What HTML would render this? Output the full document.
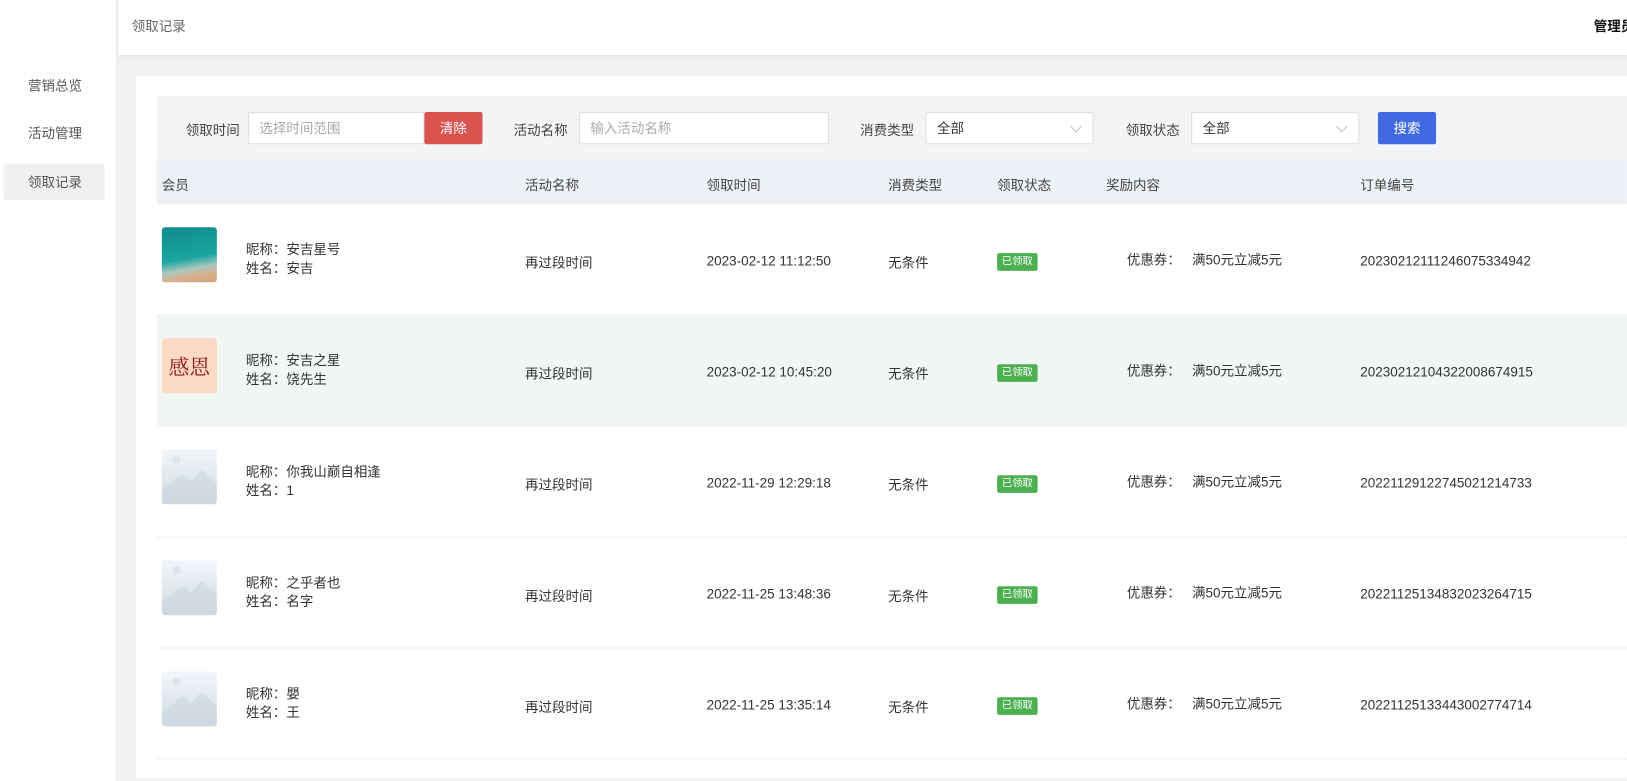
<!DOCTYPE html>
<html style="overflow:hidden;height:781px"><head><meta charset="utf-8"><style>
*{margin:0;padding:0;box-sizing:border-box}
body{width:1627px;height:781px;overflow:hidden;background:#f2f2f2;font-family:"Liberation Sans","Noto Sans CJK SC",sans-serif;font-size:13px;color:#333;position:relative}
#w{position:absolute;left:0;top:0;width:1568px;height:753px;overflow:hidden;transform:scale(1.0376);transform-origin:0 0}
.side{position:absolute;left:0;top:0;width:113px;height:753px;background:#fff;border-right:1px solid #e8e8e8}
.side div{position:absolute;left:3px;width:98px;height:35px;line-height:35px;padding-left:24px;color:#555}
.side .on{background:#f0f0f0;border-radius:3px}
.hdr{position:absolute;left:114px;top:0;width:1460px;height:53px;background:#fff;box-shadow:0 2px 6px rgba(0,0,0,.06)}
.hdr .t{position:absolute;left:13px;top:15px;color:#666}
.hdr .u{position:absolute;left:1422px;top:15px;color:#111;font-weight:bold;white-space:nowrap}
.card{position:absolute;left:131px;top:73px;width:1445px;height:677px;background:#fff}
.flt{position:absolute;left:20px;top:20px;right:0;height:62px;background:#f2f4f6}
.lbl{position:absolute;top:22px;color:#444}
.in{position:absolute;top:15px;height:31px;border:1px solid #dcdfe6;background:#fff;border-radius:2px;padding-left:10px;line-height:29px;color:#aaa}
.sel{color:#333}
.sel:after{content:"";position:absolute;right:12px;top:9px;width:7px;height:7px;border-right:1px solid #c0c4cc;border-bottom:1px solid #c0c4cc;transform:rotate(45deg)}
.btn{position:absolute;top:15px;height:31px;line-height:31px;text-align:center;color:#fff;border-radius:2px}
.th{position:absolute;left:20px;top:82px;right:0;height:42px;background:#eef1f4}
.th span,.row span{position:absolute}
.th span{top:13px;color:#444}
.row{position:absolute;left:20px;right:0;height:107px;border-bottom:1px solid #ebeef5}
.row span{top:46px}
.av{position:absolute;left:5px;top:22px;width:53px;height:53px;border-radius:3px;overflow:hidden}
.nm{position:absolute;left:86px;top:35px;line-height:18px}
.bd{position:absolute;left:810px;top:47px;width:39px;height:17px;background:#4caf50;color:#fff;font-size:10px;line-height:17px;text-align:center;border-radius:2px}
.ph{background:linear-gradient(#f3f6f8,#cfdbe3)}
</style></head><body><div id="w">
<div class="side"><div style="top:65px">营销总览</div><div style="top:111px">活动管理</div><div class="on" style="top:158px">领取记录</div></div>
<div class="hdr"><span class="t">领取记录</span><span class="u">管理员</span></div>
<div class="card">
<div class="flt">
<span class="lbl" style="left:28px">领取时间</span>
<div class="in" style="left:88px;width:170px">选择时间范围</div>
<div class="btn" style="left:258px;width:56px;background:#d9534f">清除</div>
<span class="lbl" style="left:344px">活动名称</span>
<div class="in" style="left:407px;width:241px">输入活动名称</div>
<span class="lbl" style="left:678px">消费类型</span>
<div class="in sel" style="left:741px;width:162px">全部</div>
<span class="lbl" style="left:934px">领取状态</span>
<div class="in sel" style="left:997px;width:162px">全部</div>
<div class="btn" style="left:1177px;width:56px;background:#4169e1">搜索</div>
</div>
<div class="th"><span style="left:5px">会员</span><span style="left:355px">活动名称</span><span style="left:530px">领取时间</span><span style="left:705px">消费类型</span><span style="left:810px">领取状态</span><span style="left:915px">奖励内容</span><span style="left:1160px">订单编号</span></div>

<div class="row" style="top:124px"><div class="av" style="background:linear-gradient(170deg,#0f8a8a 0%,#1aa5a0 55%,#a9c7bd 72%,#d9b08c 85%,#d2a27c 100%)"></div><div class="nm">昵称：安吉星号<br>姓名：安吉</div><span style="left:355px">再过段时间</span><span style="left:530px;top:47px">2023-02-12 11:12:50</span><span style="left:705px">无条件</span><div class="bd">已领取</div><span style="left:935px;top:43px">优惠券：&nbsp;&nbsp;&nbsp;满50元立减5元</span><span style="left:1160px;top:47px">20230212111246075334942</span></div>

<div class="row" style="top:231px;background:#f0f7f2"><div class="av" style="background:#fbd9c4;color:#8b1a1a;font-size:20px;line-height:53px;font-family:'Noto Serif CJK SC',serif;text-align:center">感恩</div><div class="nm">昵称：安吉之星<br>姓名：饶先生</div><span style="left:355px">再过段时间</span><span style="left:530px;top:47px">2023-02-12 10:45:20</span><span style="left:705px">无条件</span><div class="bd">已领取</div><span style="left:935px;top:43px">优惠券：&nbsp;&nbsp;&nbsp;满50元立减5元</span><span style="left:1160px;top:47px">20230212104322008674915</span></div>

<div class="row" style="top:338px"><div class="av ph"><svg width="53" height="53"><circle cx="14" cy="10" r="4" fill="#dde5ea"/><path d="M0 40 L20 24 L28 31 L38 20 L53 33 V53 H0Z" fill="#c9d6de" opacity=".6"/></svg></div><div class="nm">昵称：你我山巅自相逢<br>姓名：1</div><span style="left:355px">再过段时间</span><span style="left:530px;top:47px">2022-11-29 12:29:18</span><span style="left:705px">无条件</span><div class="bd">已领取</div><span style="left:935px;top:43px">优惠券：&nbsp;&nbsp;&nbsp;满50元立减5元</span><span style="left:1160px;top:47px">20221129122745021214733</span></div>

<div class="row" style="top:445px"><div class="av ph"><svg width="53" height="53"><circle cx="14" cy="10" r="4" fill="#dde5ea"/><path d="M0 40 L20 24 L28 31 L38 20 L53 33 V53 H0Z" fill="#c9d6de" opacity=".6"/></svg></div><div class="nm">昵称：之乎者也<br>姓名：名字</div><span style="left:355px">再过段时间</span><span style="left:530px;top:47px">2022-11-25 13:48:36</span><span style="left:705px">无条件</span><div class="bd">已领取</div><span style="left:935px;top:43px">优惠券：&nbsp;&nbsp;&nbsp;满50元立减5元</span><span style="left:1160px;top:47px">20221125134832023264715</span></div>

<div class="row" style="top:552px"><div class="av ph"><svg width="53" height="53"><circle cx="14" cy="10" r="4" fill="#dde5ea"/><path d="M0 40 L20 24 L28 31 L38 20 L53 33 V53 H0Z" fill="#c9d6de" opacity=".6"/></svg></div><div class="nm">昵称：嬰<br>姓名：王</div><span style="left:355px">再过段时间</span><span style="left:530px;top:47px">2022-11-25 13:35:14</span><span style="left:705px">无条件</span><div class="bd">已领取</div><span style="left:935px;top:43px">优惠券：&nbsp;&nbsp;&nbsp;满50元立减5元</span><span style="left:1160px;top:47px">20221125133443002774714</span></div>
</div>
</div></body></html>
